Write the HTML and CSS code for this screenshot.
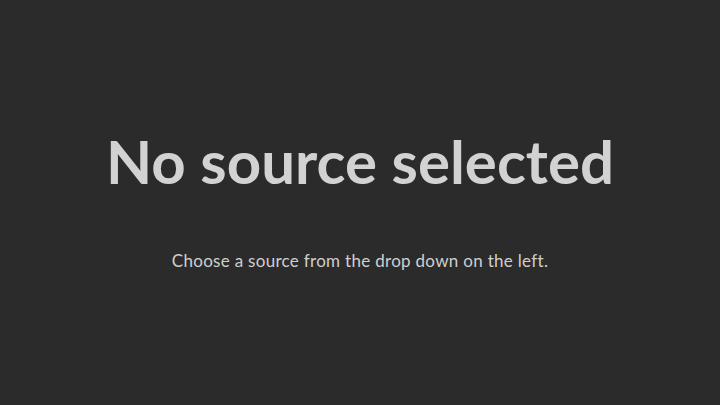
FILE: index.html
```html
<!DOCTYPE html>
<html>
<head>
<meta charset="utf-8">
<link rel="stylesheet" href="styles.css">
</head>
<body>
<main class="empty">
  <h1 class="title">No source selected</h1>
  <p class="hint">Choose a source from the drop down on the left.</p>
</main>
</body>
</html>
```
FILE: styles.css
```css
html, body {
  margin: 0;
  padding: 0;
  height: 100%;
  background: #2b2b2b;
}
.empty {
  height: 405px;
  display: flex;
  flex-direction: column;
  align-items: center;
  padding-top: 127px;
  box-sizing: border-box;
  font-family: Lato, "Open Sans", sans-serif;
  color: #d2d2d2;
}
.title {
  margin: 0;
  font-size: 60px;
  font-weight: 700;
  line-height: 68px;
  letter-spacing: 0;
}
.hint {
  margin: 56px 0 0;
  font-size: 17px;
  line-height: 20px;
  color: #cfcfcf;
  letter-spacing: 0.3px;
}
```
